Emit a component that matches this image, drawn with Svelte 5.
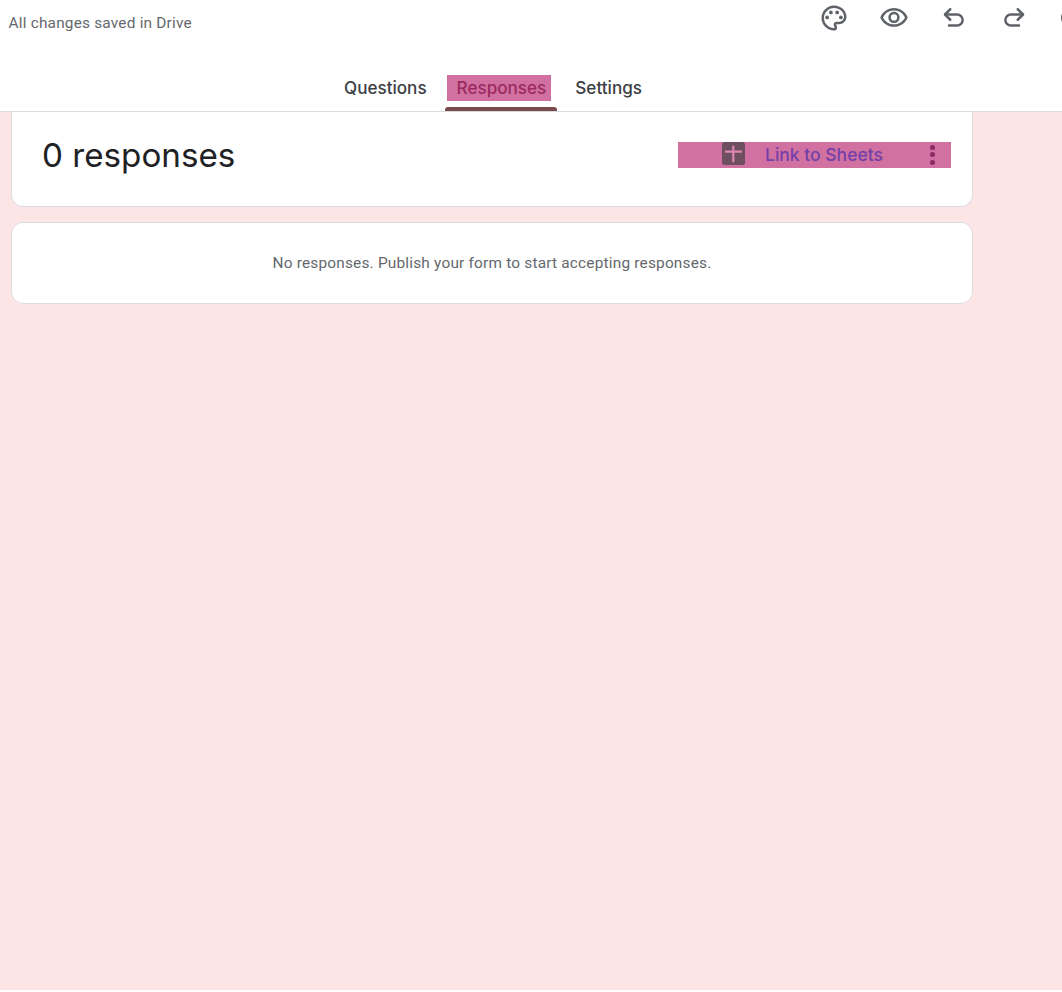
<script>
  const tabs = ['Questions', 'Responses', 'Settings'];
</script>

<div class="page">
  <header class="header">
    <div class="toprow">
      <span class="status">All changes saved in Drive</span>
      <div class="actions">
        <svg class="icon" viewBox="0 0 24 24" fill="#5f6368"><path d="M12 22C6.49 22 2 17.51 2 12S6.49 2 12 2s10 4.04 10 9c0 3.31-2.69 6-6 6h-1.77c-.28 0-.5.22-.5.5 0 .12.05.23.13.33.41.47.64 1.06.64 1.67A2.5 2.5 0 0 1 12 22zm0-18c-4.41 0-8 3.59-8 8s3.59 8 8 8c.28 0 .5-.22.5-.5a.54.54 0 0 0-.14-.35c-.41-.46-.63-1.05-.63-1.65a2.5 2.5 0 0 1 2.5-2.5H16c2.21 0 4-1.79 4-4 0-3.86-3.59-7-8-7z"/><circle cx="6.5" cy="11.5" r="1.5"/><circle cx="9.5" cy="7.5" r="1.5"/><circle cx="14.5" cy="7.5" r="1.5"/><circle cx="17.5" cy="11.5" r="1.5"/></svg>
        <svg class="icon" viewBox="0 0 24 24" fill="#5f6368"><path d="M12 6a9.77 9.77 0 0 1 8.82 5.5C19.17 14.87 15.79 17 12 17s-7.17-2.13-8.82-5.5A9.77 9.77 0 0 1 12 6m0-2C7 4 2.73 7.11 1 11.5 2.73 15.89 7 19 12 19s9.27-3.11 11-7.5C21.27 7.11 17 4 12 4zm0 5a2.5 2.5 0 0 1 0 5 2.5 2.5 0 0 1 0-5m0-2c-2.48 0-4.5 2.02-4.5 4.5S9.52 16 12 16s4.5-2.02 4.5-4.5S14.48 7 12 7z"/></svg>
        <svg class="icon" viewBox="0 0 24 24" fill="none" stroke="#5f6368" stroke-width="2" stroke-linecap="round" stroke-linejoin="round"><path d="M9 5 4.8 9.2 9 13.4"/><path d="M5 9.2h9.5a4.4 4.4 0 0 1 0 8.8H8"/></svg>
        <svg class="icon" viewBox="0 0 24 24" fill="none" stroke="#5f6368" stroke-width="2" stroke-linecap="round" stroke-linejoin="round"><path d="M15 5l4.2 4.2L15 13.4"/><path d="M19 9.2H9.5a4.4 4.4 0 0 0 0 8.8H16"/></svg>
        <span class="clipped"></span>
      </div>
    </div>
    <nav class="tabs">
      {#each tabs as tab}
        <div class="tab" class:active={tab === 'Responses'}><span class="label">{tab}</span></div>
      {/each}
    </nav>
  </header>

  <main class="main">
    <section class="card summary">
      <h1>0 responses</h1>
      <div class="link">
        <span class="sheet"><svg viewBox="0 0 23 23" width="23" height="23"><rect width="23" height="23" rx="2.5" fill="#6e4f60"/><path d="M3 9.7h17M11.3 3.7v16.6" stroke="#de86b2" stroke-width="2.2" fill="none"/></svg></span>
        <span class="linktext">Link to Sheets</span>
        <span class="dots"><i></i><i></i><i></i></span>
      </div>
    </section>
    <section class="card empty">No responses. Publish your form to start accepting responses.</section>
  </main>
</div>

<style>
  :global(body) {
    margin: 0;
    background: #fff;
    overflow: hidden;
  }
  .page {
    width: 1062px;
    height: 990px;
    overflow: hidden;
    background: #fee5e5;
  }
  .header {
    height: 111px;
    background: #fff;
    border-bottom: 1px solid #dadce0;
    display: flex;
    flex-direction: column;
  }
  .toprow {
    height: 46px;
    display: flex;
    justify-content: space-between;
    padding-left: 8.5px;
  }
  .status {
    font: 15.4px/46px Roboto, sans-serif;
    letter-spacing: 0.2px;
    color: #64686d;
  }
  .actions {
    display: flex;
    gap: 30px;
    padding-top: 3px;
    width: 243px;
    flex: none;
    box-sizing: border-box;
  }
  .icon {
    width: 30px;
    height: 30px;
    flex: none;
  }
  .clipped {
    width: 20px;
    height: 20px;
    margin: 5px 0 0 2px;
    border: 2.5px solid #5f6368;
    border-radius: 50%;
    flex: none;
    box-sizing: border-box;
  }
  .tabs {
    display: flex;
    padding: 19px 0 0 337px;
    flex: 1;
  }
  .tab {
    position: relative;
    padding: 10px 7px 0;
    font: 450 17.1px/26px Inter, sans-serif;
    color: #3c4043;
    margin-right: 11px;
  }
  .label { display: block; height: 26px; }
  .tab.active { padding: 10px 0 0; margin-right: 11px; color: #9c2a60; }
  .tab.active .label {
    background: #d171a1;
    padding: 0 5px 0 10px;
    margin: 0 6px 0 2px;
  }
  .tab.active::after {
    content: '';
    position: absolute;
    left: 0;
    right: 0;
    bottom: 0;
    height: 4px;
    background: #7a4a4d;
    border-radius: 3px 3px 0 0;
  }
  .main {
    width: 962px;
    margin-left: 11px;
  }
  .card {
    background: #fff;
    border: 1px solid #dadce0;
    border-radius: 12px;
    box-sizing: border-box;
  }
  .summary {
    height: 95px;
    border-top: 0;
    border-radius: 0 0 12px 12px;
    display: flex;
    align-items: center;
    justify-content: space-between;
    padding: 0 21px 9px 30px;
  }
  h1 {
    margin: 0;
    font: 400 33.2px/44px Inter, sans-serif;
    color: #202124;
  }
  .link {
    width: 273px;
    height: 26px;
    padding-right: 16px;
    box-sizing: border-box;
    background: #d171a1;
    display: flex;
    align-items: center;
    font: 450 17.5px/27px Inter, sans-serif;
    color: #7440a8;
  }
  .sheet { margin-left: 44px; display: flex; align-self: flex-start; }
  .linktext { margin-left: 20px; }
  .dots {
    margin-left: auto;
    display: flex;
    flex-direction: column;
    gap: 2.5px;
  }
  .dots i {
    width: 5px;
    height: 5px;
    border-radius: 50%;
    background: #8a2a62;
    display: block;
  }
  .empty {
    height: 82px;
    margin-top: 15px;
    text-align: center;
    font: 15.4px/80px Roboto, sans-serif;
    letter-spacing: 0.2px;
    color: #64686d;
  }
</style>
